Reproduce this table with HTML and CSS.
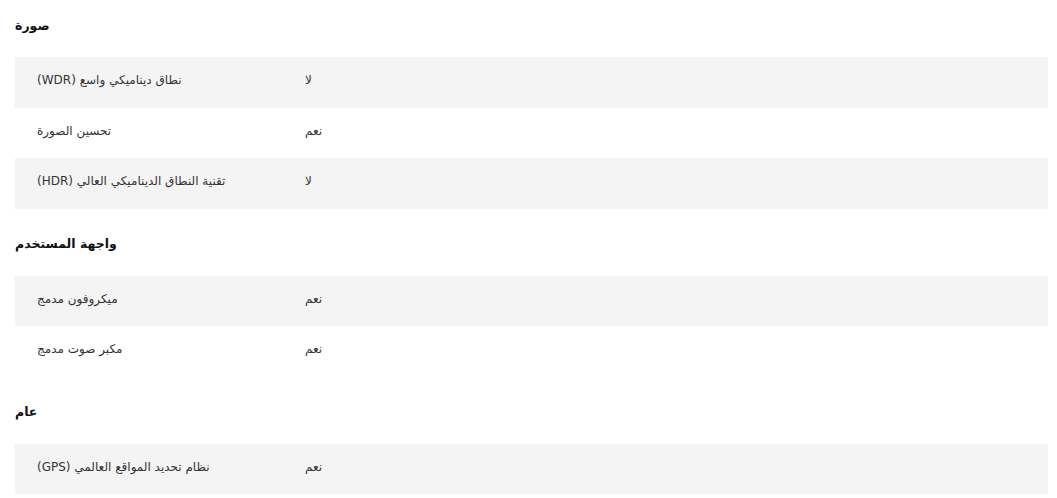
FILE: index.html
```html
<!DOCTYPE html>
<html lang="ar">
<head>
<meta charset="utf-8">
<link rel="stylesheet" href="styles.css">
</head>
<body>
<div class="specs">
  <section class="group">
    <h3 class="group-title"><span dir="rtl">صورة</span></h3>
    <div class="row"><div class="label"><span dir="rtl">نطاق ديناميكي واسع (WDR)</span></div><div class="value"><span dir="rtl">لا</span></div></div>
    <div class="row"><div class="label"><span dir="rtl">تحسين الصورة</span></div><div class="value"><span dir="rtl">نعم</span></div></div>
    <div class="row"><div class="label"><span dir="rtl">تقنية النطاق الديناميكي العالي (HDR)</span></div><div class="value"><span dir="rtl">لا</span></div></div>
  </section>
  <section class="group">
    <h3 class="group-title"><span dir="rtl">واجهة المستخدم</span></h3>
    <div class="row"><div class="label"><span dir="rtl">ميكروفون مدمج</span></div><div class="value"><span dir="rtl">نعم</span></div></div>
    <div class="row"><div class="label"><span dir="rtl">مكبر صوت مدمج</span></div><div class="value"><span dir="rtl">نعم</span></div></div>
  </section>
  <section class="group">
    <h3 class="group-title"><span dir="rtl">عام</span></h3>
    <div class="row"><div class="label"><span dir="rtl">نظام تحديد المواقع العالمي (GPS)</span></div><div class="value"><span dir="rtl">نعم</span></div></div>
  </section>
</div>
</body>
</html>
```
FILE: styles.css
```css
html, body {
  margin: 0;
  padding: 0;
  background: #ffffff;
}
body {
  font-family: "DejaVu Sans", "Noto Sans", sans-serif;
  color: #333333;
}
.specs {
  padding: 0 9px 0 15px;
}
.group + .group {
  margin-top: 10px;
}
.group-title {
  margin: 0;
  height: 57px;
  display: flex;
  align-items: center;
  padding-bottom: 7px;
  box-sizing: border-box;
  font-size: 12.5px;
  font-weight: bold;
  color: #111111;
}
.row {
  display: flex;
  align-items: center;
  height: 50.5px;
  font-size: 12px;
}
.row:nth-of-type(odd) {
  background: #f4f4f4;
}
.label {
  width: 268px;
  padding-left: 22px;
  padding-bottom: 4px;
}
.value {
  flex: 1;
  padding-bottom: 4px;
}
```
